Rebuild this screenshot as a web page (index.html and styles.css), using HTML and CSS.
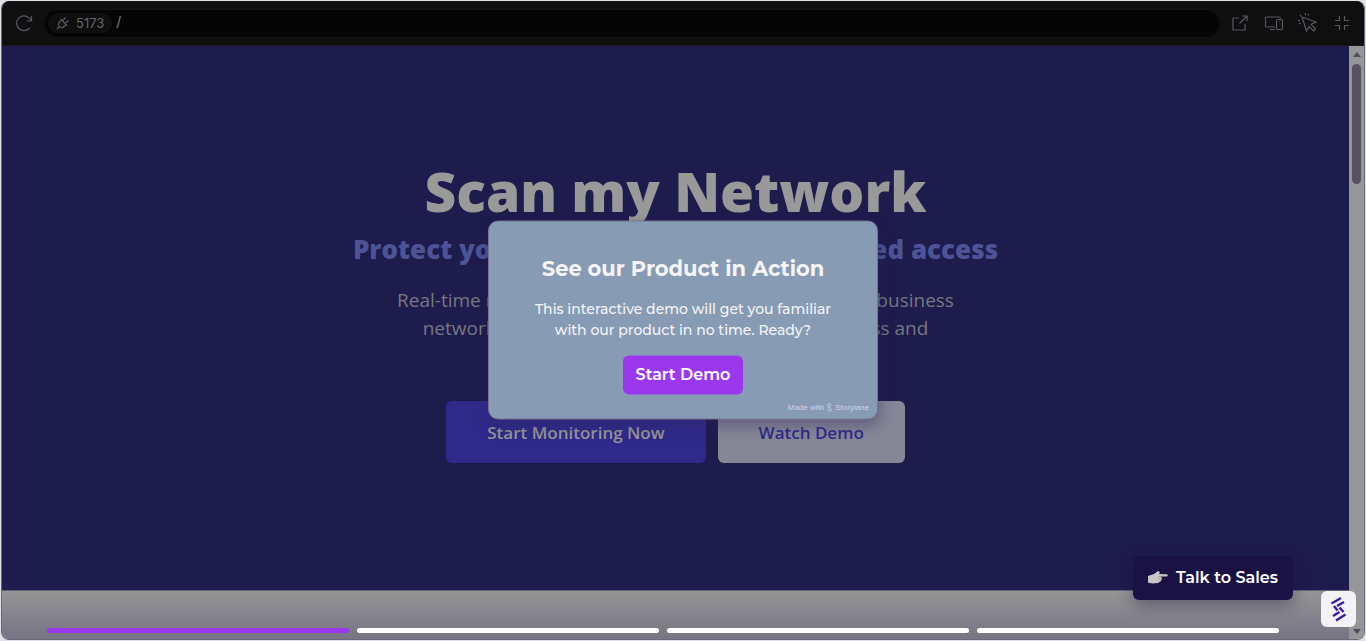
FILE: index.html
```html
<!DOCTYPE html>
<html lang="en">
<head>
    <meta charset="UTF-8">
    <meta name="viewport" content="width=device-width, initial-scale=1.0">
    <title>Scan my Network - Demo</title>
    <link rel="stylesheet" href="styles.css">
</head>
<body>
    <div class="frame">
        <header class="toolbar">
            <button class="tool" aria-label="Reload">
                <svg width="18" height="18" viewBox="0 0 18 18"><path d="M16 6.500L14 4A7.300 7.300 0 1 0 14.500 14M16.500 2v5h-5"/></svg>
            </button>
            <div class="address">
                <button class="port">
                    <svg width="14" height="14" viewBox="0 0 14 14"><path d="M1 13l2.500-2.500M4.500 3L11 9.500M5.500 4L3.500 6Q1.200 8.200 3.500 10.500Q5.800 12.800 8 10.500L10 8.500M6.500 5L9.500 1.500M9 7.500L12.500 4.500"/></svg>
                    5173
                </button>
                <input class="path" type="text" value="/" aria-label="Path">
            </div>
            <button class="tool" aria-label="Open in new tab">
                <svg width="18" height="18" viewBox="0 0 18 18"><path d="M8 4H2v12h12v-6M11 2h5v5M16 2L8.500 9.500"/></svg>
            </button>
            <button class="tool" aria-label="Device size">
                <svg width="20" height="18" viewBox="0 0 20 18"><path d="M11 13H3a1.500 1.500 0 0 1-1.500-1.500v-7A1.500 1.500 0 0 1 3 3h12a1.500 1.500 0 0 1 1.500 1.500M6 15.500h5"/><rect x="12.500" y="5.500" width="6" height="10" rx="1.500"/><path d="M15 8h1"/></svg>
            </button>
            <button class="tool" aria-label="Inspect element">
                <svg width="20" height="20" viewBox="0 0 20 20"><path d="M4 4l14 5-5 2.500 4.500 4.500-2 2-4.500-4.500-2.500 4.500zM7.500 0v2M11 1l-1 1.500M0 7.500h2M1 11l1.500-1M2 2l1 1"/></svg>
            </button>
            <button class="tool" aria-label="Exit full screen">
                <svg width="18" height="18" viewBox="0 0 18 18"><path d="M6.500 2v4.500H2M11.500 2v4.500H16M6.500 16v-4.500H2M11.500 16v-4.500H16"/></svg>
            </button>
        </header>

        <div class="viewport">
            <main class="page">
                <section class="hero">
                    <h1>Scan my Network</h1>
                    <h2>Protect your business from unauthorized access</h2>
                    <p>Real-time monitoring and intrusion detection for your business<br>
                    network. Detect new devices, stop threats, avoid loss and<br>
                    stay in control.</p>
                    <div class="hero-actions">
                        <button class="btn primary">Start Monitoring Now</button>
                        <button class="btn secondary">Watch Demo</button>
                    </div>
                </section>
            </main>
            <div class="scrollbar">
                <span class="arrow up"></span>
                <span class="thumb"></span>
                <span class="arrow down"></span>
            </div>
        </div>

        <!-- demo player on top of the page -->
        <div class="shade"></div>

        <div class="modal" role="dialog" aria-labelledby="demoTitle">
            <h3 id="demoTitle">See our Product in Action</h3>
            <p>This interactive demo will get you familiar<br>with our product in no time. Ready?</p>
            <button class="start">Start Demo</button>
            <a class="made-with" href="#">Made with
                <svg width="7" height="10" viewBox="0 0 18 24"><use href="#lane"/></svg>
                Storylane</a>
        </div>

        <a class="sales" href="#">
            <svg width="20" height="14" viewBox="0 0 20 14"><path fill="#c9c5c4" d="M0 6l6-2 4-3 2 1-1 2 8 .3q1.500 1 0 2.200L13 6.500l1 2-1 2.500-3 2-6 .500-4-1z"/><path fill="none" stroke="#a5a0a4" d="M10 6.500h3M10 9h3"/></svg>
            Talk to Sales
        </a>

        <a class="badge" href="#" aria-label="Storylane">
            <svg width="18" height="26" viewBox="0 0 18 24">
                <g id="lane" fill="none" stroke="currentColor" stroke-width="2.400"><path d="M1.500 6.500L11 1M7 9l7-4M4 9l3.500 4.500M9.500 10.500l4 4.500M3 19l6.500-4M6 23.500l9.500-6"/></g>
            </svg>
        </a>

        <div class="steps">
            <span class="step done"></span>
            <span class="step"></span>
            <span class="step"></span>
            <span class="step"></span>
        </div>
    </div>
</body>
</html>
```
FILE: styles.css
```css
/* general */
* {
    box-sizing: border-box;
}

body {
    margin: 0;
    padding: 1px;
    height: 100vh;
    background: #dfe3e8;
    font-family: "Open Sans", "Noto Sans", sans-serif;
}

button {
    font-family: inherit;
    border: none;
    cursor: pointer;
}

h1, h2, h3, p {
    margin: 0;
}

.frame {
    position: relative;
    height: 100%;
    display: flex;
    flex-direction: column;
    overflow: hidden;
    border: 1px solid #6c697c;
    border-top: none;
    border-radius: 8px;
}

/* browser bar */
.toolbar {
    display: flex;
    align-items: center;
    gap: 8px;
    height: 45px;
    padding: 0 9px;
    background: #0f0f0f;
    border-bottom: 1px solid #17171c;
}

.tool {
    display: flex;
    align-items: center;
    justify-content: center;
    width: 26px;
    height: 26px;
    padding: 0;
    background: none;
}

.toolbar svg {
    flex: none;
    fill: none;
    stroke: #5a5665;
    stroke-width: 1.2;
}

.address {
    flex: 1;
    display: flex;
    align-items: center;
    height: 29px;
    margin: 0 -2px;
    padding: 0 4px;
    background: #050505;
    border: 1px solid #141414;
    border-radius: 15px;
}

.port {
    display: flex;
    align-items: center;
    gap: 6px;
    height: 20px;
    padding: 0 8px;
    border-radius: 10px;
    background: #0e0e0e;
    color: #67636f;
    font: 13px Inter, sans-serif;
}

.path {
    flex: 1;
    min-width: 0;
    padding: 0 4px;
    border: none;
    outline: none;
    background: none;
    color: #77737f;
    font: 16px "Liberation Sans", sans-serif;
}

/* site */
.viewport {
    flex: 1;
    display: flex;
    min-height: 0;
}

.page {
    flex: 1;
    background: #969696;
    overflow: hidden;
}

.hero {
    height: 545px;
    padding-top: 111px;
    background: #1e1b4d;
    border-bottom: 1px solid #65637a;
    text-align: center;
    white-space: nowrap;
}

.hero h1 {
    font-size: 55px;
    line-height: 68px;
    font-weight: 800;
    color: #989998;
}

.hero h2 {
    font-size: 26px;
    line-height: 48px;
    font-weight: 800;
    color: #4c5397;
}

.hero p {
    margin-top: 13px;
    font-size: 19px;
    line-height: 28px;
    color: #77777f;
}

.hero-actions {
    display: flex;
    justify-content: center;
    gap: 12px;
    margin-top: 31px;
}

.btn {
    height: 62px;
    padding: 0 41px;
    border-radius: 6px;
    font-size: 17px;
    font-weight: 600;
}

.primary {
    background: #2f2a89;
    color: #969696;
}

.secondary {
    background: #858797;
    color: #2f2a89;
}

.scrollbar {
    display: flex;
    flex-direction: column;
    align-items: center;
    width: 15px;
    padding: 6px 0 5px;
    background: #969696;
}

.arrow {
    border: 4px solid transparent;
}

.up {
    border-top: none;
    border-bottom: 5px solid #514d5c;
}

.down {
    margin-top: auto;
    border-bottom: none;
    border-top: 5px solid #514d5c;
}

.thumb {
    width: 9px;
    height: 120px;
    margin-top: 7px;
    border-radius: 5px;
    background: #555160;
}

/* demo player */
.shade {
    position: absolute;
    left: 0;
    right: 15px;
    bottom: 0;
    height: 50px;
    background: linear-gradient(transparent, #777483);
}

.modal {
    position: absolute;
    top: 50%;
    left: 50%;
    transform: translate(-50%, -50%);
    width: 390px;
    padding: 33px 40px 24px;
    border: 1px solid #77758c;
    border-radius: 10px;
    background: #889bb5;
    box-shadow: 2px 6px 14px rgba(45, 35, 90, 0.4);
    color: #f5f5f8;
    text-align: center;
    white-space: nowrap;
}

.modal h3 {
    font: 700 21px/28px Montserrat, "Open Sans", sans-serif;
}

.modal p {
    margin-top: 16px;
    font: 500 14px/21px Montserrat, "Open Sans", sans-serif;
}

.start {
    width: 120px;
    height: 39px;
    margin-top: 15px;
    padding: 0 0 2px;
    border-radius: 6px;
    background: #9b38ed;
    color: #fff;
    font: 600 16px Montserrat, "Open Sans", sans-serif;
}

.made-with {
    position: absolute;
    right: 8px;
    bottom: 6px;
    display: flex;
    align-items: center;
    gap: 2px;
    color: #d2d0e8;
    font: 8px/10px "Liberation Sans", sans-serif;
    text-decoration: none;
}

.sales {
    position: absolute;
    right: 71px;
    bottom: 39px;
    display: flex;
    align-items: center;
    gap: 8px;
    height: 44px;
    padding: 0 15px 2px;
    border-radius: 6px;
    background: #1a1244;
    box-shadow: 0 5px 16px rgba(25, 20, 55, 0.4);
    color: #fff;
    font: 600 16px Montserrat, "Open Sans", sans-serif;
    text-decoration: none;
}

.badge {
    position: absolute;
    right: 8px;
    bottom: 12px;
    display: flex;
    align-items: center;
    justify-content: center;
    width: 35px;
    height: 36px;
    border-radius: 6px;
    background: #f3f3f7;
    color: #3d18a0;
}

.steps {
    position: absolute;
    left: 45px;
    right: 85px;
    bottom: 6px;
    display: flex;
    gap: 8px;
}

.step {
    flex: 1;
    height: 5px;
    border-radius: 3px;
    background: #fff;
}

.done {
    background: #9b38ed;
}
```
